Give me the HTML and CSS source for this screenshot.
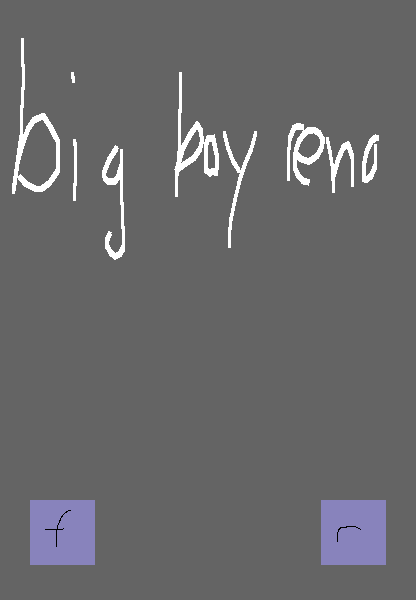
FILE: index.html
```html
<!DOCTYPE html>
<html lang="en">
<head>
<meta charset="utf-8">
<title>Sketch pad</title>
<link rel="stylesheet" href="styles.css">
</head>
<body>
<main class="pad">
  <svg class="sketch" viewBox="0 0 416 480" role="img" aria-label="Freehand sketch">
    <defs>
      <g id="ink">
        <polyline points="22.5,41 22.5,64 23.5,67 23.5,87 22.5,90 22.5,105 21.5,108 21.5,139 18,160 13.6,191"/>
        <polyline points="72.5,75 73.5,80"/>
        <polyline points="74.5,142 75.5,146 75.5,183 74.5,186 74.5,198"/>
        <polyline points="121.5,152 121.5,202 122.5,205 122.5,226 123.5,229 123.5,249"/>
        <polyline points="180.5,75 180.5,109 179.5,113 179.5,147 178,165 176.5,180 176.5,194"/>
        <polyline points="224.5,134 228,148 233,161 238.5,170"/>
        <polyline points="255.5,134 251,150 245,164 240,179 235,200 231,219 229.5,233 229.5,245"/>
        <polyline points="288.5,178 288.5,154 290,138"/>
        <polyline points="327.5,140 330,152 332.5,168 333.5,190"/>
        <polyline points="352.5,157 352.5,184"/>
        <polyline points="377.5,138 374,138"/>
        <polyline points="375.5,166 375.5,147"/>
        <g class="curves">
          <polyline points="15,180 18,160 23,143 28,129 34,120 43.5,116 51,128 57.7,141 57.7,171 49.5,183 41.5,189 36,189 26,184 20.5,178"/>
          <polyline points="21,139 18,160 14,187"/>
          <polyline points="116,149 109,160 104.2,172 104.5,178 108,181.5 115,181.5 118,177 121,167"/>
          <polyline points="123,248 120,254 115,256.5 111,253 107,246 107,240 109.3,235"/>
          <polyline points="177,169 183,148 190,135 197.3,124.5 201,131 202,141 200,149 194,158 185,164 177,170"/>
          <polyline points="213.5,138 208,138.5 206,145 206,170 210,173.5 213,171 216,173 217,166 217,156 215,147 213.5,139"/>
          <polyline points="290,138 294,128 297,126.5 302,127"/>
          <polyline points="297,155 301,159 309,161.5 317,156 321.5,148 323,140 319,133 314,130 308,130.5 304,134 299,141 295.5,152 294.5,167 298,175 303,181 307.5,182"/>
          <polyline points="334,174 338,160 343.5,147 348,144.5 352,156"/>
          <polyline points="375.5,138 371.5,141 366.5,152 364,165 364,179 366.5,180 371,176 375,167"/>
        </g>
      </g>
    </defs>
    <use href="#ink" y="-1.5"/>
    <use href="#ink"/>
    <use href="#ink" y="1.5"/>
  </svg>
  <nav class="tools">
    <button class="tool" aria-label="Fill">
      <svg class="mark" viewBox="0 0 65 65">
        <path d="M26.5 47V31.5L27.5 28V26L29 23L31 18L34 14L37 11.5L38.5 10.5H41M15 29.5H32L34 28.5"/>
      </svg>
    </button>
    <button class="tool" aria-label="Reset">
      <svg class="mark" viewBox="0 0 65 65">
        <path d="M16.5 42V33.5L18 29.5L20 27.5H25L25.5 26.5H34L36 27.5L40 29.5"/>
      </svg>
    </button>
  </nav>
</main>
</body>
</html>
```
FILE: styles.css
```css
body {
  margin: 0;
  background: #646464;
}

.pad {
  box-sizing: border-box;
  display: flex;
  flex-direction: column;
  justify-content: space-between;
  width: 416px;
  height: 600px;
  padding-bottom: 35px;
  overflow: hidden;
}

.sketch {
  display: block;
  width: 416px;
  height: 480px;
  fill: none;
  stroke: #fff;
  stroke-width: 3;
  stroke-linecap: square;
  stroke-linejoin: round;
  shape-rendering: crispEdges;
}

.curves {
  stroke-width: 3.8;
}

.tools {
  display: flex;
  justify-content: space-between;
  padding: 0 30px;
}

.tool {
  width: 65px;
  height: 65px;
  padding: 0;
  border: 0;
  background: #8883bc;
}

.mark {
  display: block;
  width: 65px;
  height: 65px;
  fill: none;
  stroke: #000;
  stroke-width: 1;
  shape-rendering: crispEdges;
}
```
